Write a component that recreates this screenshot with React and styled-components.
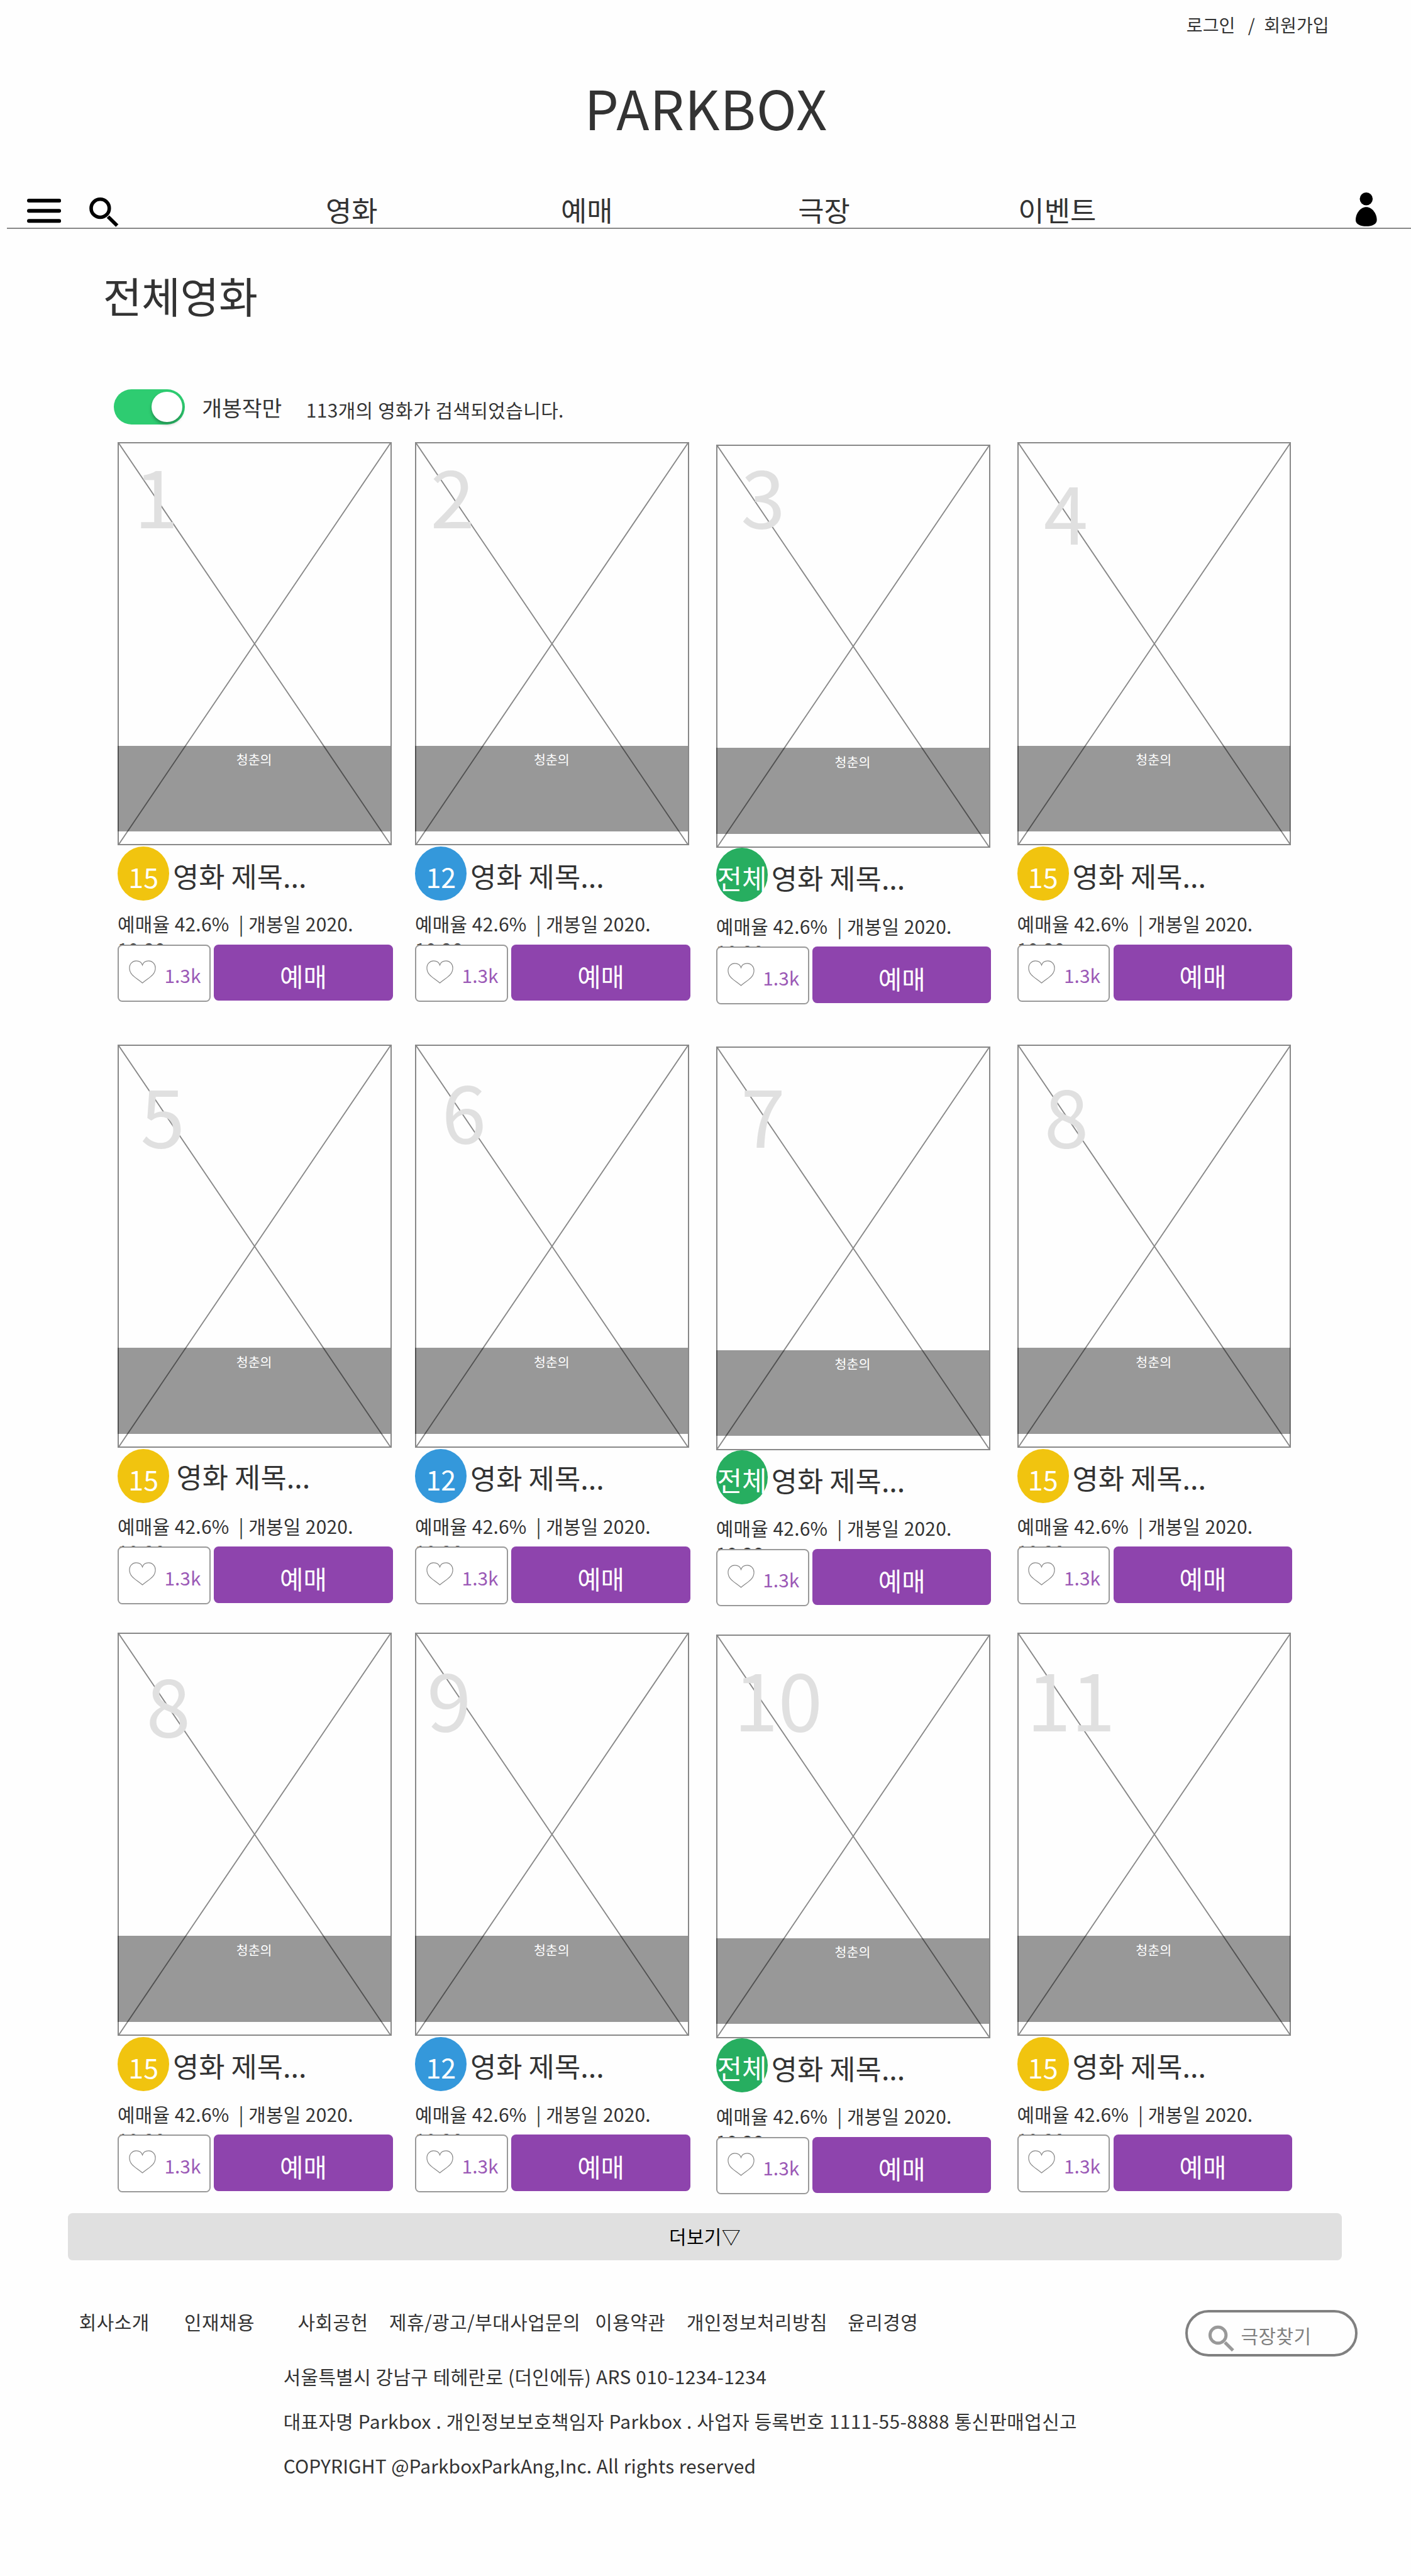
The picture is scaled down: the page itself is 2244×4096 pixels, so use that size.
import React from "react";
import styled, { createGlobalStyle } from "styled-components";

const SCALE = 0.935;
const u = (n) => `${Math.round(n * SCALE * 1000) / 1000}px`;

const GlobalStyle = createGlobalStyle`
  * { box-sizing: border-box; }
  body {
    margin: 0;
    background: #fefefe;
    color: #333;
    font-family: "Noto Sans CJK KR", "Noto Sans", sans-serif;
  }
  h1, p, ul { margin: 0; padding: 0; font-weight: 400; }
  button { font: inherit; border: 0; padding: 0; }
`;

const Page = styled.div`
  width: ${u(2400)};
  height: ${u(4380)};
  display: flex;
  flex-direction: column;
  overflow: hidden;
  & > * { flex-shrink: 0; }
`;

const UtilityBar = styled.div`
  display: flex;
  height: ${u(122)};
  padding: ${u(21.2)} 0 0 ${u(2018)};
  font-size: ${u(30)};
  line-height: ${u(40)};
`;

const UtilityItem = styled.span`
  white-space: nowrap;
  margin-right: ${(p) => u(p.$gap || 0)};
`;

const Logo = styled.div`
  height: ${u(203)};
  text-align: center;
  padding-left: ${u(2)};
  font-size: ${u(92)};
  letter-spacing: ${u(1)};
  line-height: ${u(120)};
`;

const NavBar = styled.nav`
  display: flex;
  height: ${u(64)};
  margin-left: ${u(12)};
  border-bottom: 2px solid #888;
  font-size: ${u(48)};
  line-height: ${u(62)};
`;

const NavIcon = styled.svg`
  display: block;
  flex: none;
  width: ${(p) => u(p.$w)};
  height: ${(p) => u(p.$h)};
  margin: ${(p) => u(p.$top)} 0 0 ${(p) => u(p.$left)};
`;

const NavLinks = styled.div`
  display: flex;
  flex: none;
  margin-left: ${u(352)};
`;

const NavLink = styled.span`
  flex: none;
  white-space: nowrap;
  width: ${(p) => u(p.$w)};
`;

const PageTitle = styled.h1`
  height: ${u(273)};
  padding: ${u(68)} 0 0 ${u(175)};
  font-size: ${u(72)};
  letter-spacing: ${u(-0.5)};
  line-height: ${u(90)};
`;

const FilterRow = styled.div`
  display: flex;
  height: ${u(90)};
  padding-left: ${u(194)};
  line-height: ${u(60)};
`;

const Toggle = styled.div`
  display: flex;
  justify-content: flex-end;
  align-items: center;
  width: ${u(120)};
  height: ${u(60)};
  padding-right: ${u(4)};
  border-radius: ${u(30)};
  background: #2ecc71;
`;

const Knob = styled.span`
  width: ${u(52)};
  height: ${u(52)};
  border-radius: 50%;
  background: #fff;
  box-shadow: 0 ${u(4)} ${u(6)} rgba(0, 0, 0, 0.3);
`;

const FilterLabel = styled.span`
  width: ${u(177)};
  margin-left: ${u(29.5)};
  font-size: ${u(37)};
  white-space: nowrap;
`;

const ResultCount = styled.span`
  padding-top: ${u(4)};
  font-size: ${u(32)};
  letter-spacing: ${u(0.45)};
  word-spacing: ${u(0.5)};
  white-space: nowrap;
`;

const MovieGrid = styled.main`
  display: grid;
  grid-template-columns: ${u(506)} ${u(512)} ${u(512)} ${u(470)};
  grid-template-rows: ${u(1024)} ${u(1000)} ${u(988)};
  padding-left: ${u(200)};
`;

const Card = styled.article`
  display: flex;
  flex-direction: column;
  width: ${u(470)};
  margin-top: ${(p) => u(p.$drop)};
`;

const Poster = styled.div`
  position: relative;
  flex: none;
  width: ${u(466)};
  height: ${u(686)};
  border: 2px solid #888;
`;

const Cross = styled.svg`
  display: block;
  width: 100%;
  height: 100%;
`;

const Caption = styled.div`
  position: absolute;
  left: -2px;
  top: ${u(514)};
  width: ${u(464.5)};
  height: ${u(146)};
  padding-top: ${u(8)};
  background: rgba(0, 0, 0, 0.4);
  color: #fff;
  text-align: center;
  font-size: ${u(22)};
  line-height: ${u(32)};
`;

const Rank = styled.span`
  position: absolute;
  left: ${(p) => u(p.$x - 2)};
  top: ${(p) => u(p.$base - 131.5)};
  color: #e0e0e0;
  font-size: ${u(136)};
  line-height: ${u(136)};
`;

const TitleRow = styled.div`
  display: flex;
  flex: none;
  height: ${u(111)};
`;

const Badge = styled.span`
  flex: none;
  display: flex;
  justify-content: center;
  width: ${u(88)};
  height: ${u(92)};
  margin-top: ${(p) => u(p.$top)};
  padding-top: ${u(4)};
  border-radius: 50%;
  background: ${(p) => p.$color};
  color: #fff;
  font-size: ${u(46)};
  line-height: ${u(92)};
  white-space: nowrap;
`;

const MovieTitle = styled.span`
  padding: ${(p) => u(20.5 + p.$dy)} 0 0 ${(p) => u(6 + p.$dx)};
  font-size: ${u(48)};
  line-height: ${u(60)};
  white-space: nowrap;
`;

const Meta = styled.p`
  flex: none;
  height: ${u(57)};
  font-size: ${u(32)};
  letter-spacing: ${u(0.25)};
  word-spacing: ${u(0.55)};
  line-height: ${u(43.8)};
  white-space: pre-wrap;
`;

const Actions = styled.div`
  position: relative;
  display: flex;
  gap: ${u(6)};
`;

const LikeButton = styled.button`
  display: flex;
  width: ${u(158)};
  height: ${u(98)};
  padding-left: ${u(17)};
  border: 2px solid #999;
  border-radius: ${u(8)};
  background: #fff;
  color: #9b59b6;
  font-size: ${u(32)};
  line-height: ${u(46)};
`;

const Heart = styled.svg`
  flex: none;
  width: ${u(46)};
  height: ${u(40)};
  margin-top: ${u(25)};
`;

const LikeCount = styled.span`
  margin: ${u(27.5)} 0 0 ${u(14.5)};
`;

const BookButton = styled.button`
  width: ${u(304)};
  height: ${u(96)};
  padding-top: ${u(11.5)};
  border-radius: ${u(8)};
  background: #8e44ad;
  color: #fff;
  font-size: ${u(43.5)};
  line-height: ${u(84.5)};
`;

const MoreButton = styled.button`
  width: ${u(2166)};
  height: ${u(80)};
  margin-left: ${u(116)};
  padding-bottom: ${u(2)};
  border-radius: ${u(8)};
  background: #e0e0e0;
  color: #000;
  font-size: ${u(32)};
  letter-spacing: ${u(0.4)};
  line-height: ${u(78)};
`;

const FooterRow = styled.div`
  display: flex;
  height: ${u(159)};
  padding: ${u(81.7)} 0 0 ${u(134.5)};
  font-size: ${u(32)};
  letter-spacing: ${u(0.5)};
  line-height: ${u(46)};
`;

const FooterLink = styled.span`
  flex: none;
  width: ${(p) => u(p.$w)};
  white-space: nowrap;
`;

const TheaterSearch = styled.div`
  display: flex;
  width: ${u(293)};
  height: ${u(80)};
  margin-top: ${u(2.3)};
  padding-left: ${u(33)};
  border: ${u(4.3)} solid #808080;
  border-radius: ${u(40)};
  color: #808080;
`;

const SearchText = styled.span`
  padding: ${u(16)} 0 0 ${u(11)};
  white-space: nowrap;
`;

const CompanyInfo = styled.div`
  padding-left: ${u(482)};
  font-size: ${u(32)};
  line-height: ${u(76)};
  white-space: nowrap;
`;

const InfoLine = styled.p`
  letter-spacing: ${(p) => u(p.$track)};
  word-spacing: ${u(0.6)};
`;

const BADGES = {
  15: { label: "15", color: "#f1c40f" },
  12: { label: "12", color: "#3498db" },
  all: { label: "전체", color: "#27ae60" },
};

const MOVIES = [
  { rank: "1", x: 28, base: 148, age: "15" },
  { rank: "2", x: 26, base: 148, age: "12" },
  { rank: "3", x: 42, base: 144, age: "all" },
  { rank: "4", x: 45, base: 176, age: "15" },
  { rank: "5", x: 39, base: 178, age: "15", dx: 6, dy: -2 },
  { rank: "6", x: 45.5, base: 170, age: "12" },
  { rank: "7", x: 42, base: 174, age: "all" },
  { rank: "8", x: 46, base: 178, age: "15" },
  { rank: "8", x: 48.5, base: 180, age: "15" },
  { rank: "9", x: 20, base: 170, age: "12" },
  { rank: "10", x: 30, base: 166, age: "all" },
  { rank: "11", x: 16, base: 170, age: "15" },
];

const FOOTER_LINKS = [
  ["회사소개", 179],
  ["인재채용", 193],
  ["사회공헌", 155.5],
  ["제휴/광고/부대사업문의", 350],
  ["이용약관", 156],
  ["개인정보처리방침", 274],
  ["윤리경영", 574.5],
];

function Magnifier({ color, size, top, left }) {
  return (
    <NavIcon $w={size} $h={size} $top={top} $left={left} viewBox="0 0 52 52" fill="none" stroke={color}>
      <circle cx="20.7" cy="20.5" r="15.4" strokeWidth="6" />
      <path d="M34 34.7 L49.5 50" strokeWidth="6.2" />
    </NavIcon>
  );
}

function MovieCard({ movie, lowered }) {
  const badge = BADGES[movie.age];
  return (
    <Card $drop={lowered ? 4 : 0}>
      <Poster>
        <Cross viewBox="0 0 462 682" preserveAspectRatio="none" fill="none" stroke="#888" strokeWidth="2">
          <path d="M0 0 L462 682 M462 0 L0 682" />
        </Cross>
        <Caption>청춘의</Caption>
        <Rank $x={movie.x} $base={movie.base}>{movie.rank}</Rank>
      </Poster>
      <TitleRow>
        <Badge $color={badge.color} $top={lowered ? 0 : 2}>{badge.label}</Badge>
        <MovieTitle $dx={movie.dx || 0} $dy={movie.dy || 0}>영화 제목...</MovieTitle>
      </TitleRow>
      <Meta>{"예매율 42.6%  | 개봉일 2020.\n10.28"}</Meta>
      <Actions>
        <LikeButton>
          <Heart viewBox="0 0 46 40" fill="none" stroke="#888" strokeWidth="1.3">
            <path d="M23 38.5 C15.5 32.3 9.5 29 5.5 24.5 C2.5 21 1 17.5 1 13 C1 6 6 1 12.5 1 C17 1 21.5 3.5 23 8 C24.5 3.5 29 1 33.5 1 C40 1 45 6 45 13 C45 17.5 43.5 21 40.5 24.5 C36.5 29 30.5 32.3 23 38.5 Z" />
          </Heart>
          <LikeCount>1.3k</LikeCount>
        </LikeButton>
        <BookButton>예매</BookButton>
      </Actions>
    </Card>
  );
}

export default function App() {
  return (
    <Page>
      <GlobalStyle />
      <UtilityBar>
        <UtilityItem $gap={22}>로그인</UtilityItem>
        <UtilityItem $gap={15.5}>/</UtilityItem>
        <UtilityItem>회원가입</UtilityItem>
      </UtilityBar>
      <Logo>PARKBOX</Logo>
      <NavBar>
        <NavIcon $w={58} $h={42} $top={13.5} $left={34} viewBox="0 0 58 42">
          <rect y="0" width="58" height="6.4" rx="3.2" />
          <rect y="17.3" width="58" height="6.4" rx="3.2" />
          <rect y="34.5" width="58" height="6.4" rx="3.2" />
        </NavIcon>
        <Magnifier color="#000" size={52} top={9} left={46} />
        <NavLinks>
          <NavLink $w={400}>영화</NavLink>
          <NavLink $w={403.5}>예매</NavLink>
          <NavLink $w={374.5}>극장</NavLink>
          <NavLink $w={574}>이벤트</NavLink>
        </NavLinks>
        <NavIcon $w={36} $h={58} $top={2.7} $left={0} viewBox="0 0 36 58">
          <circle cx="18" cy="11" r="11" />
          <path d="M18 25 C28 25 36 36 36 47 C36 54 28 57.5 18 57.5 C8 57.5 0 54 0 47 C0 36 8 25 18 25 Z" />
        </NavIcon>
      </NavBar>
      <PageTitle>전체영화</PageTitle>
      <FilterRow>
        <Toggle><Knob /></Toggle>
        <FilterLabel>개봉작만</FilterLabel>
        <ResultCount>113개의 영화가 검색되었습니다.</ResultCount>
      </FilterRow>
      <MovieGrid>
        {MOVIES.map((movie, i) => (
          <MovieCard key={i} movie={movie} lowered={i % 4 === 2} />
        ))}
      </MovieGrid>
      <MoreButton>더보기▽</MoreButton>
      <FooterRow>
        {FOOTER_LINKS.map(([label, w]) => (
          <FooterLink key={label} $w={w}>{label}</FooterLink>
        ))}
        <TheaterSearch>
          <Magnifier color="#999" size={46} top={20.4} left={0} />
          <SearchText>극장찾기</SearchText>
        </TheaterSearch>
      </FooterRow>
      <CompanyInfo>
        <InfoLine $track={0.38}>서울특별시 강남구 테헤란로 (더인에듀) ARS 010-1234-1234</InfoLine>
        <InfoLine $track={0.4}>대표자명 Parkbox . 개인정보보호책임자 Parkbox . 사업자 등록번호 1111-55-8888 통신판매업신고</InfoLine>
        <InfoLine $track={0.15}>COPYRIGHT @ParkboxParkAng,Inc. All rights reserved</InfoLine>
      </CompanyInfo>
    </Page>
  );
}
